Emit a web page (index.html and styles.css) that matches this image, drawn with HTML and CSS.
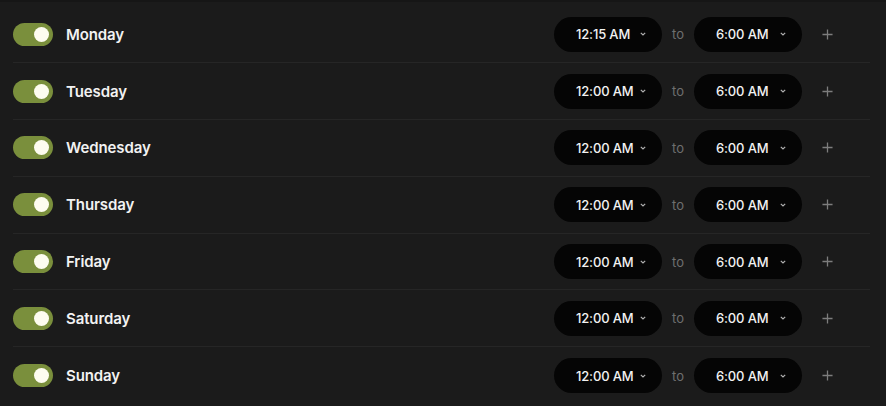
FILE: index.html
```html
<!DOCTYPE html>
<html>
<head>
<meta charset="utf-8">
<link rel="stylesheet" href="styles.css">
</head>
<body>
<div class="list">
  <div class="row">
    <span class="toggle"><span class="knob"></span></span>
    <span class="day">Monday</span>
    <div class="times">
      <button class="pill"><span>12:15 AM</span><svg class="chev" viewBox="0 0 6 4"><path d="M0.8 0.8 L3 3 L5.2 0.8"/></svg></button>
      <span class="to">to</span>
      <button class="pill"><span>6:00 AM</span><svg class="chev" viewBox="0 0 6 4"><path d="M0.8 0.8 L3 3 L5.2 0.8"/></svg></button>
      <span class="plus"><svg viewBox="0 0 12 12"><path d="M6 0.5 V11.5 M0.5 6 H11.5"/></svg></span>
    </div>
  </div>
  <div class="row">
    <span class="toggle"><span class="knob"></span></span>
    <span class="day">Tuesday</span>
    <div class="times">
      <button class="pill"><span>12:00 AM</span><svg class="chev" viewBox="0 0 6 4"><path d="M0.8 0.8 L3 3 L5.2 0.8"/></svg></button>
      <span class="to">to</span>
      <button class="pill"><span>6:00 AM</span><svg class="chev" viewBox="0 0 6 4"><path d="M0.8 0.8 L3 3 L5.2 0.8"/></svg></button>
      <span class="plus"><svg viewBox="0 0 12 12"><path d="M6 0.5 V11.5 M0.5 6 H11.5"/></svg></span>
    </div>
  </div>
  <div class="row">
    <span class="toggle"><span class="knob"></span></span>
    <span class="day">Wednesday</span>
    <div class="times">
      <button class="pill"><span>12:00 AM</span><svg class="chev" viewBox="0 0 6 4"><path d="M0.8 0.8 L3 3 L5.2 0.8"/></svg></button>
      <span class="to">to</span>
      <button class="pill"><span>6:00 AM</span><svg class="chev" viewBox="0 0 6 4"><path d="M0.8 0.8 L3 3 L5.2 0.8"/></svg></button>
      <span class="plus"><svg viewBox="0 0 12 12"><path d="M6 0.5 V11.5 M0.5 6 H11.5"/></svg></span>
    </div>
  </div>
  <div class="row">
    <span class="toggle"><span class="knob"></span></span>
    <span class="day">Thursday</span>
    <div class="times">
      <button class="pill"><span>12:00 AM</span><svg class="chev" viewBox="0 0 6 4"><path d="M0.8 0.8 L3 3 L5.2 0.8"/></svg></button>
      <span class="to">to</span>
      <button class="pill"><span>6:00 AM</span><svg class="chev" viewBox="0 0 6 4"><path d="M0.8 0.8 L3 3 L5.2 0.8"/></svg></button>
      <span class="plus"><svg viewBox="0 0 12 12"><path d="M6 0.5 V11.5 M0.5 6 H11.5"/></svg></span>
    </div>
  </div>
  <div class="row">
    <span class="toggle"><span class="knob"></span></span>
    <span class="day">Friday</span>
    <div class="times">
      <button class="pill"><span>12:00 AM</span><svg class="chev" viewBox="0 0 6 4"><path d="M0.8 0.8 L3 3 L5.2 0.8"/></svg></button>
      <span class="to">to</span>
      <button class="pill"><span>6:00 AM</span><svg class="chev" viewBox="0 0 6 4"><path d="M0.8 0.8 L3 3 L5.2 0.8"/></svg></button>
      <span class="plus"><svg viewBox="0 0 12 12"><path d="M6 0.5 V11.5 M0.5 6 H11.5"/></svg></span>
    </div>
  </div>
  <div class="row">
    <span class="toggle"><span class="knob"></span></span>
    <span class="day">Saturday</span>
    <div class="times">
      <button class="pill"><span>12:00 AM</span><svg class="chev" viewBox="0 0 6 4"><path d="M0.8 0.8 L3 3 L5.2 0.8"/></svg></button>
      <span class="to">to</span>
      <button class="pill"><span>6:00 AM</span><svg class="chev" viewBox="0 0 6 4"><path d="M0.8 0.8 L3 3 L5.2 0.8"/></svg></button>
      <span class="plus"><svg viewBox="0 0 12 12"><path d="M6 0.5 V11.5 M0.5 6 H11.5"/></svg></span>
    </div>
  </div>
  <div class="row">
    <span class="toggle"><span class="knob"></span></span>
    <span class="day">Sunday</span>
    <div class="times">
      <button class="pill"><span>12:00 AM</span><svg class="chev" viewBox="0 0 6 4"><path d="M0.8 0.8 L3 3 L5.2 0.8"/></svg></button>
      <span class="to">to</span>
      <button class="pill"><span>6:00 AM</span><svg class="chev" viewBox="0 0 6 4"><path d="M0.8 0.8 L3 3 L5.2 0.8"/></svg></button>
      <span class="plus"><svg viewBox="0 0 12 12"><path d="M6 0.5 V11.5 M0.5 6 H11.5"/></svg></span>
    </div>
  </div>
</div>
</body>
</html>
```
FILE: styles.css
```css
html, body {
  margin: 0;
  padding: 0;
  background: #1b1b1b;
  height: 100%;
  overflow: hidden;
}
body {
  font-family: Inter, "Liberation Sans", sans-serif;
  color: #f2f2f2;
  border-top: 2px solid #161616;
  box-sizing: border-box;
}
.list {
  margin-left: 13px;
  width: 857px;
  padding-top: 4.5px;
}
.row {
  height: 56.8px;
  box-sizing: border-box;
  display: flex;
  align-items: center;
  border-bottom: 1px solid #262626;
}
.row:last-child {
  border-bottom: none;
}
.toggle {
  width: 40px;
  height: 23px;
  border-radius: 12px;
  background: #7a8f3c;
  display: flex;
  align-items: center;
  justify-content: flex-end;
  padding-right: 4px;
  box-sizing: border-box;
  flex: none;
}
.knob {
  width: 15px;
  height: 15px;
  border-radius: 50%;
  background: #fdfcef;
}
.day {
  margin-left: 13px;
  font-size: 15px;
  font-weight: 600;
  letter-spacing: -0.1px;
}
.times {
  margin-left: auto;
  display: flex;
  align-items: center;
  margin-right: 31px;
}
.pill {
  width: 108px;
  height: 35px;
  border: none;
  border-radius: 18px;
  background: #050505;
  color: #f2f2f2;
  font-family: Inter, "Liberation Sans", sans-serif;
  font-size: 13px;
  font-weight: 500;
  letter-spacing: -0.15px;
  display: flex;
  align-items: center;
  justify-content: space-between;
  padding: 0 16px 0 22px;
  box-sizing: border-box;
}
.chev {
  width: 6px;
  height: 4px;
  fill: none;
  stroke: #b0b0b0;
  stroke-width: 1.2;
}
.to {
  width: 32px;
  text-align: center;
  font-size: 13px;
  color: #6f6f6f;
}
.plus {
  width: 24px;
  margin-left: 13px;
  display: flex;
  justify-content: center;
}
.plus svg {
  width: 11px;
  height: 11px;
  fill: none;
  stroke: #7d7d7d;
  stroke-width: 1.4;
}
```
